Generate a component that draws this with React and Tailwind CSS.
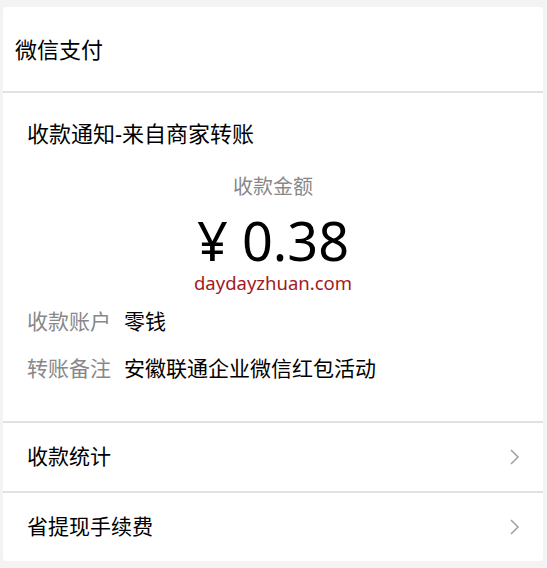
const font = { fontFamily: '"Noto Sans", "Noto Sans CJK SC", sans-serif' };

const LinkRow = ({ label }) => (
  <div className="flex h-[68px] items-center justify-between pl-6 pr-[22px]">
    <span className="text-[21px] text-black">{label}</span>
    <svg width="12" height="18" viewBox="0 0 12 18" className="text-[#a3a3a3]">
      <path d="M2 2 L9 9 L2 16" fill="none" stroke="currentColor" strokeWidth="1.6" />
    </svg>
  </div>
);

const Divider = () => <div className="h-[2px] bg-[#e1e1e1]" />;

const InfoRow = ({ label, value, className }) => (
  <div className={`flex items-center gap-[13px] leading-[30px] ${className}`}>
    <span className="text-[21px] text-[#888888]">{label}</span>
    <span className="text-[21px] text-black">{value}</span>
  </div>
);

export default function App() {
  return (
    <div
      className="min-h-screen bg-[#f3f3f3] pt-[7px] pl-[3px] pr-[4px]"
      style={font}
    >
      <div className="w-[540px] rounded-[3px] bg-white">
        <div className="flex h-[84px] items-center pl-3 text-[22px] text-black">
          微信支付
        </div>
        <Divider />

        <div className="px-6 pt-[25px] pb-[38px]">
          <h2 className="text-[22px] leading-[30px] text-black">
            收款通知-来自商家转账
          </h2>

          <div className="mt-[25px] flex flex-col items-center">
            <p className="text-[20px] leading-[28px] text-[#888888]">收款金额</p>
            <p className="mt-[9px] text-[54px] leading-[60px] text-black">¥ 0.38</p>
            <p className="text-[18.5px] leading-[26px] text-[#a2191d]">
              daydayzhuan.com
            </p>
          </div>

          <InfoRow className="mt-[10px]" label="收款账户" value="零钱" />
          <InfoRow className="mt-[17px]" label="转账备注" value="安徽联通企业微信红包活动" />
        </div>

        <Divider />
        <LinkRow label="收款统计" />
        <Divider />
        <LinkRow label="省提现手续费" />
      </div>
    </div>
  );
}
